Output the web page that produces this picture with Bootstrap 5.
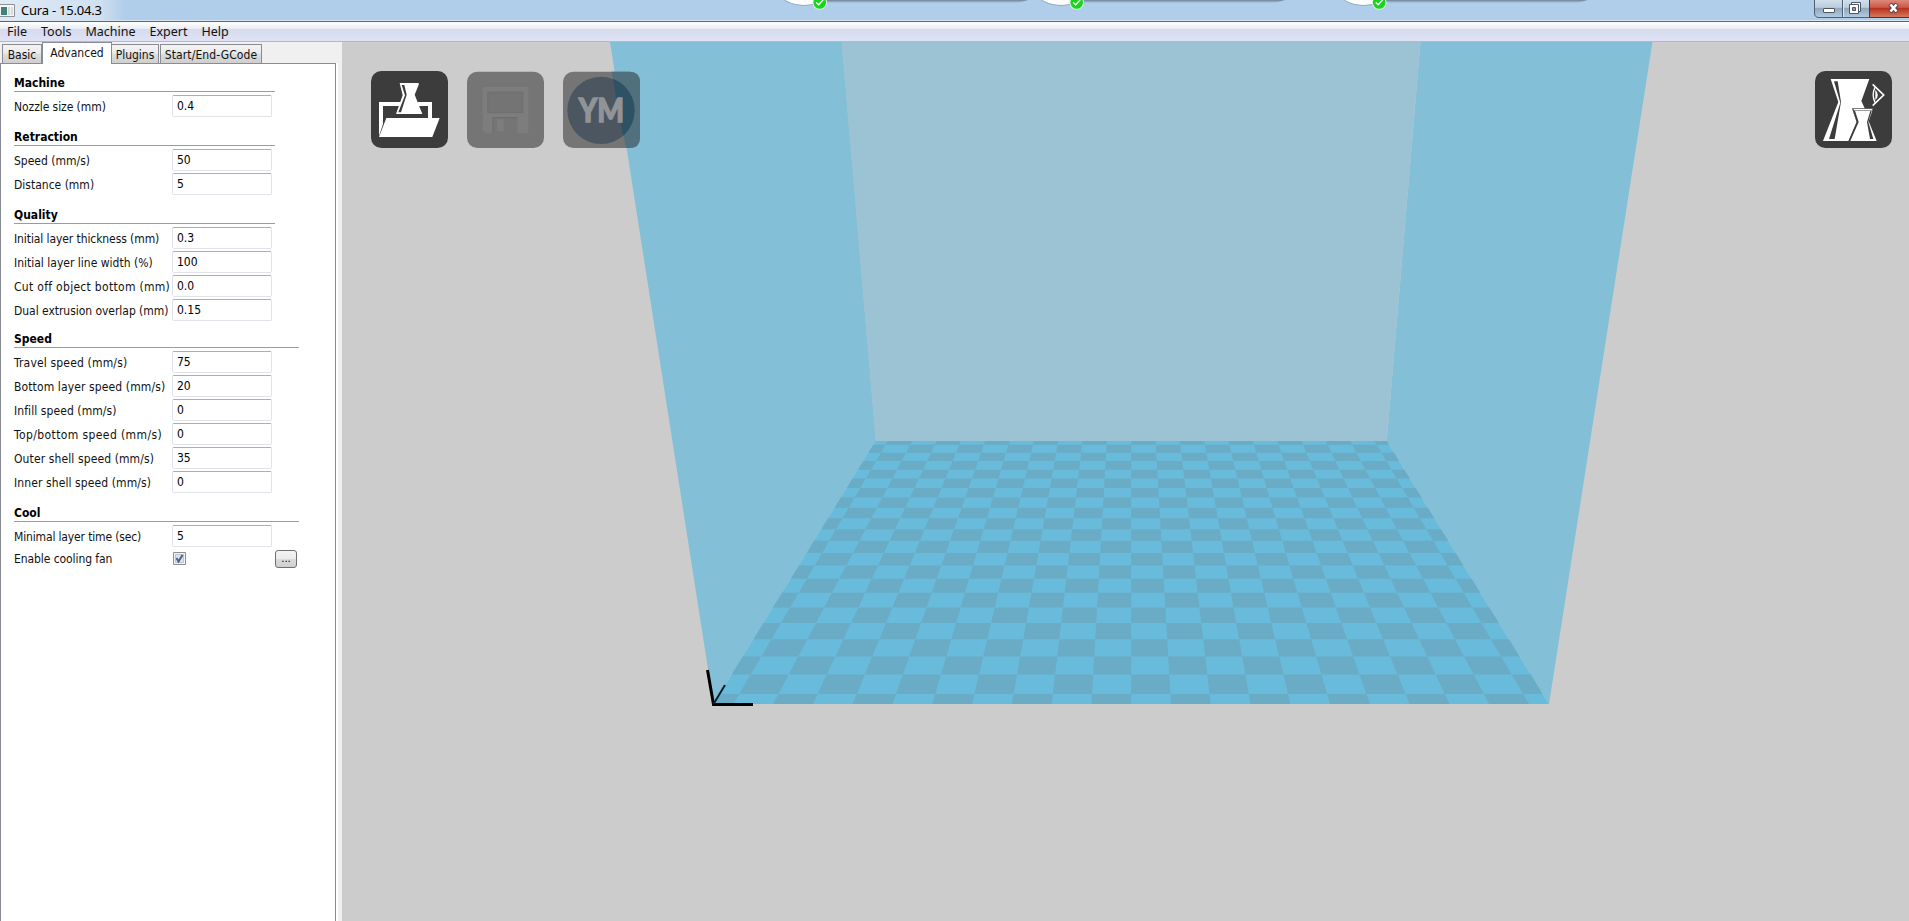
<!DOCTYPE html>
<html lang="en">
<head>
<meta charset="utf-8">
<title>Cura - 15.04.3</title>
<link rel="stylesheet" href="https://cdn.jsdelivr.net/npm/bootstrap@5.3.0/dist/css/bootstrap.min.css">
<style>
body{font-family:"DejaVu Sans Condensed","DejaVu Sans",sans-serif;font-stretch:condensed;font-size:12px;line-height:16px;color:#111;background:#f0f0f0}
.titlebar{height:22px;background:linear-gradient(90deg,#dfeaf5 0,#cfe0f1 100px,#b0cde9 125px,#b0cde9);border-bottom:1px solid #56657c;font:13px/21px "Noto Sans",sans-serif;letter-spacing:-.22px;color:#000}
.titlebar:before{content:"";position:absolute;left:0;right:0;top:20px;height:1px;background:#d8e6f4}
.app-icon{width:15px;height:13px;margin-top:4px}
.app-title{margin-left:6px}
.tray{position:absolute;left:770px;top:0}
.wincontrols{position:absolute;right:0;top:0}
.menubar{height:20px;background:linear-gradient(#fff 0,#e8ecf3 7px,#d5daee 7px,#dfe2f5 18px);border-bottom:1px solid #b4b8c6;font:12.5px/19px "Noto Sans",sans-serif;color:#111;padding-left:7px;column-gap:14px}
.menubar a{color:inherit;text-decoration:none}
.sidebar{width:342px;flex:none;border-right:4px solid #f0f0f0;background:#fff}
.tabstrip{height:21px;background:#f0f0f0;padding-left:2px;margin-right:-4px}
.tabstrip .nav-link{height:19px;padding:0;border:1px solid #898c95;border-bottom:0;border-radius:0;background:linear-gradient(#f3f3f3,#ebebeb 45%,#ddd 50%,#cfcfcf);color:#111;text-align:center;line-height:20px;font-size:12px;white-space:nowrap}
.tabstrip .nav-link.active{height:22px;background:#fff;line-height:20px;margin-bottom:-1px;z-index:1;position:relative}
.settings{border:1px solid #898c95;border-bottom:0;width:336px;height:858px;padding:1px 0 0 13px;background:#fff}
.group-title{width:261px;height:27px;border-bottom:1px solid #9c9c9c;margin-bottom:3px;font-weight:700;line-height:17px;padding-top:10px;color:#000}
.wide-title{width:285px}
.short-title{height:25px;padding-top:8px}
.setting{height:24px}
.setting label{width:158px;line-height:24px;white-space:nowrap}
.setting input.form-control{width:100px;height:22px;min-height:0;border:1px solid #e2e3ea;border-top-color:#abadb3;border-radius:2px;padding:0 0 1px 4px;font-size:12px;line-height:16px;color:#000;font-stretch:normal;font-family:"DejaVu Sans Condensed",sans-serif}
.more{width:22px;height:18px;border:1px solid #707070;border-radius:3px;background:linear-gradient(#f4f4f4,#ebebeb 48%,#dcdcdc 50%,#cfcfcf);padding:0;font-size:11px;line-height:12px;color:#000}
.view{background:#ccc;height:879px;position:relative}
.scene{display:block}
.toolbtn{position:absolute;display:block;padding:0;border:0;background:none;width:77px;height:77px;top:29px}
.toolbtn svg{display:block}
</style>
<script src="https://cdn.jsdelivr.net/npm/bootstrap@5.3.0/dist/js/bootstrap.bundle.min.js"></script>
</head>
<body class="vh-100 overflow-hidden">
<header class="titlebar d-flex position-relative">
  <svg class="app-icon" viewBox="0 0 15 13"><path d="M0 .5h14.5v12H0" fill="#f4f6f5" stroke="#8b9298"/><path d="M1 3h6v8H1z" fill="#41837b"/><path d="M8 3h2v8H8zM11 3h2v8h-2z" fill="#d5dbd8"/></svg>
  <span class="app-title">Cura - 15.04.3</span>
  <svg class="tray" width="830" height="14" viewBox="770 0 830 14">
    <defs><linearGradient id="sh" x2="0" y2="1"><stop stop-color="#6f8299"/><stop offset="1" stop-color="#b0cde9"/></linearGradient>
    <g id="trayitem"><path d="M20 0H224L214 3H20z" fill="url(#sh)"/><ellipse cx="0" cy="-9" rx="25" ry="15" fill="#95abc2"/><ellipse cx="0" cy="-10" rx="25" ry="15" fill="#fff"/><circle cx="15.700" cy="2.500" r="7.300" fill="#e0f4e6"/><circle cx="15.700" cy="2.500" r="6.300" fill="#1bd31f"/><path d="M12.200 2.500l2.500 2.300 4.500-5" fill="none" stroke="#fff" stroke-width="1.300"/></g></defs>
    <use href="#trayitem" x="804"/><use href="#trayitem" x="1061"/><use href="#trayitem" x="1363.500"/>
  </svg>
  <svg class="wincontrols" width="95" height="19" viewBox="1814 0 95 19">
    <defs><linearGradient id="wb" x2="0" y2="1"><stop stop-color="#d5e1ed"/><stop offset=".45" stop-color="#bccddd"/><stop offset=".5" stop-color="#91a7bf"/><stop offset="1" stop-color="#b5cbe1"/></linearGradient>
    <linearGradient id="wr" x2="0" y2="1"><stop stop-color="#dd9286"/><stop offset=".45" stop-color="#cc5947"/><stop offset=".5" stop-color="#b8301c"/><stop offset="1" stop-color="#d57c61"/></linearGradient></defs>
    <path d="M1814.500-1v14q0 4.500 4.500 4.500h51V-1z" fill="url(#wb)" stroke="#4e6075"/>
    <path d="M1869.500-1v18.500H1910V-1z" fill="url(#wr)" stroke="#5b302e"/>
    <path d="M1842.500 0v17" stroke="#4e6075"/><path d="M1843.500 0v17" stroke="#dbe6f0"/>
    <rect x="1823.500" y="8.500" width="11" height="4" rx=".5" fill="#fff" stroke="#4c5665"/>
    <path d="M1851.500 2.500h9v9h-9z" fill="#fff" stroke="#4c5665"/><path d="M1849.500 4.500h9v9h-9z" fill="#fff" stroke="#4c5665"/><path d="M1852.500 7.500h3v3h-3z" fill="#8ba1b8" stroke="#4c5665"/>
    <path d="M1890 4l7 8M1897 4l-7 8" stroke="#57464c" stroke-width="4.500"/><path d="M1890.500 4.500l6 7M1896.500 4.500l-6 7" stroke="#fff" stroke-width="2.600"/>
  </svg>
</header>
<nav class="menubar d-flex"><a href="#">File</a><a href="#">Tools</a><a href="#">Machine</a><a href="#">Expert</a><a href="#">Help</a></nav>
<main class="d-flex">
  <aside class="sidebar">
    <div class="tabstrip nav d-flex flex-nowrap align-items-end">
      <a class="nav-link" href="#" style="width:40px">Basic</a>
      <a class="nav-link active" href="#" style="width:70px">Advanced</a>
      <a class="nav-link" href="#" style="width:47px;border-left:0">Plugins</a>
      <a class="nav-link" href="#" style="width:102px;margin-left:1px;letter-spacing:.1px">Start/End-GCode</a>
    </div>
    <form class="settings" id="settings"></form>
  </aside>
  <section class="view flex-grow-1">
    <svg class="scene" width="1567" height="879" viewBox="342 42 1567 879">
      <path d="M610 42H842L876 441 713.500 704z" fill="#83c0d8"/>
      <path d="M1652.500 42H1420.500L1386.700 441 1549 704z" fill="#83c0d8"/>
      <path d="M841.500 42H1420.500L1386.700 441H875.700z" fill="#9cc3d3"/>
      <path d="M875.700 441H1386.700L1549 704H713.500z" fill="#68bbdb"/>
      <path id="checker" fill="#6aabc5"/>
      <path d="M707.500 670L713.500 704.500H753" fill="none" stroke="#000" stroke-width="3"/><path d="M713.500 704L725 685" stroke="#06202b" stroke-width="2"/>
    </svg>
    <button class="toolbtn" style="left:29px" aria-label="Load"><svg width="77" height="77" viewBox="63 63 231 231"><rect x="63" y="63" width="231" height="231" rx="31" fill="#3c3c3c"/>
      <path d="M87 156H153V168H99V222L87 258zM203 156H246V206H234V168H203z" fill="#fff"/><path d="M149 99H206V104L194 134L217 192H138L158 136z" fill="#fff"/><path d="M155 105H163L170 134L153 187H145L165 136z" fill="#3c3c3c"/><path d="M109 204H269L247 261H87z" fill="#fff"/></svg></button>
    <button class="toolbtn" style="left:125px" aria-label="Save"><svg width="77" height="77" viewBox="351 63 231 231"><rect x="351" y="65" width="231" height="229" rx="31" fill="#757575"/>
      <path d="M398 111H535V250H502V202H430V250H407L398 241z" fill="#7d7d7d"/><path d="M413 126H519V188H413z" fill="#747474" stroke="#6d6d6d" stroke-width="2"/><path d="M429 250V203H502" fill="none" stroke="#6d6d6d" stroke-width="3"/><path d="M441 207H461V243H441z" fill="#7d7d7d"/></svg></button>
    <button class="toolbtn" style="left:221px" aria-label="YouMagine"><svg width="77" height="77" viewBox="639 63 231 231"><rect x="639" y="65" width="231" height="229" rx="31" fill="#757575"/>
      <path d="M785 65H839Q870 65 870 96V263Q870 294 839 294H828z" fill="#50707d"/><circle cx="753" cy="181" r="101" fill="#4c5661"/><path d="M789 87A101 101 0 0 1 819 257z" fill="#2d5165"/>
      <text x="754" y="217" text-anchor="middle" textLength="136" lengthAdjust="spacingAndGlyphs" font-family="Lato" font-weight="900" font-size="97" fill="#909497" stroke="#909497" stroke-width="4">YM</text></svg></button>
    <button class="toolbtn" style="left:1473px" aria-label="View mode"><svg width="77" height="77" viewBox="105 213 231 231"><rect x="105" y="213" width="231" height="231" rx="31" fill="#3c3c3c"/>
      <path d="M152 237H268L244 303 254 325H216L230 366 207 423H129L175 306z" fill="#fff"/><path d="M162 244H173L183 306 164 417H147L181 308z" fill="#3c3c3c"/>
      <path d="M217 326H279L266 364 290 423H207L231 366z" fill="#fff"/><path d="M217 326H279V332H225L236 366 211 423H205L230 366z" fill="#3c3c3c"/><path d="M221 329H277" stroke="#fff" stroke-width="4"/><path d="M271 333L261 366 270 417H280L265 366 275 333z" fill="#3c3c3c"/>
      <path d="M278 253L311 285 278 317" fill="none" stroke="#fff" stroke-width="5"/><path d="M285 262Q274 285 285 307" fill="none" stroke="#fff" stroke-width="4"/><path d="M286 269Q301 285 286 300z" fill="#fff"/></svg></button>
  </section>
</main>
<script>
// Each row: label, value, tracking of the label in px
const groups = [
  ['Machine','',[['Nozzle size (mm)','0.4',-.07]]],
  ['Retraction','',[['Speed (mm/s)','50',0],['Distance (mm)','5',0]]],
  ['Quality','',[['Initial layer thickness (mm)','0.3',-.09],['Initial layer line width (%)','100',0],['Cut off object bottom (mm)','0.0',.3],['Dual extrusion overlap (mm)','0.15',-.04]]],
  ['Speed','wide-title short-title',[['Travel speed (mm/s)','75',.17],['Bottom layer speed (mm/s)','20',.12],['Infill speed (mm/s)','0',.08],['Top/bottom speed (mm/s)','0',.4],['Outer shell speed (mm/s)','35',.11],['Inner shell speed (mm/s)','0',.1]]],
  ['Cool','wide-title',[['Minimal layer time (sec)','5',-.15]]]
];
document.getElementById('settings').innerHTML = groups.map(([title, cls, rows]) =>
  `<div class="group-title ${cls}">${title}</div>` + rows.map(([name, value, track]) =>
  `<div class="setting d-flex"><label style="letter-spacing:${track}px">${name}</label><input class="form-control" value="${value}"></div>`).join('')).join('') +
  `<div class="d-flex" style="height:20px"><label style="width:159px;line-height:21px;letter-spacing:-.08px">Enable cooling fan</label>
   <svg style="margin-top:3px" width="13" height="13" viewBox="0 0 13 13"><path d="M.5.5h12v12H.5z" fill="#f4f4f4" stroke="#8e8f8f"/><path d="M2.500 2.500h8v8h-8z" fill="#dfe4ea" stroke="#bcc3cb"/><path d="M3.500 6l2 3.500L9.500 3" fill="none" stroke="#4a5f97" stroke-width="2"/></svg>
   <button type="button" class="more" style="margin:1px 0 0 89px">...</button></div>`;

// Build plate: 210 mm square with 10 mm tiles, seen in perspective
const half = 10.5, back = 1 / 511, front = 1 / 835.5;
const edge = k => { const w = 1 / ((back + front) / 2 - k * (back - front) / (2 * half)); return [w, 441 + (w - 511) * 263 / 324.5]; };
const clamp = v => Math.max(-half, Math.min(half, v));
let d = '';
for (let j = -11; j < 11; j++) for (let i = -11; i < 11; i++) {
  if ((i + j) % 2 === 0) continue;
  const [w1, y1] = edge(clamp(j)), [w2, y2] = edge(clamp(j + 1));
  const x = (w, v) => (1131.2 + w * clamp(v) / 21).toFixed(2);
  d += `M${x(w1, i)} ${y1.toFixed(2)}H${x(w1, i + 1)}L${x(w2, i + 1)} ${y2.toFixed(2)}H${x(w2, i)}z`;
}
document.getElementById('checker').setAttribute('d', d);
</script>
</body>
</html>
